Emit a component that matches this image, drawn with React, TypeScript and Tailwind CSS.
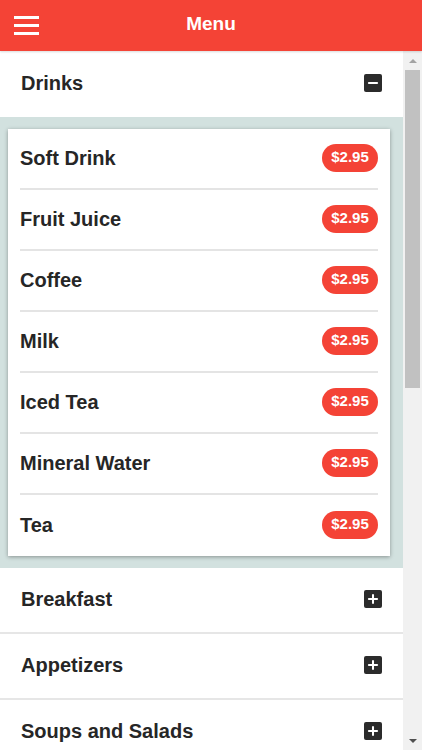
import { Minus, Plus } from "lucide-react";

const DRINKS = [
  "Soft Drink",
  "Fruit Juice",
  "Coffee",
  "Milk",
  "Iced Tea",
  "Mineral Water",
  "Tea",
];

const OTHER_SECTIONS = ["Breakfast", "Appetizers", "Soups and Salads"];

function ToggleIcon({ open }: { open: boolean }) {
  return (
    <span className="flex h-[18px] w-[18px] items-center justify-center rounded-[2px] bg-[#2b2b2b] text-white">
      {open ? <Minus size={14} strokeWidth={3.5} /> : <Plus size={14} strokeWidth={3.5} />}
    </span>
  );
}

function SectionHeader({ title, open }: { title: string; open: boolean }) {
  return (
    <div className="flex h-[66px] items-center justify-between border-b-2 border-[#e6e6e6] pb-[3px] pl-[21px] pr-[21px]">
      <span className="text-[20px] font-bold text-[#262626]">{title}</span>
      <ToggleIcon open={open} />
    </div>
  );
}

export default function App() {
  return (
    <div
      className="flex h-[750px] w-[422px] flex-col overflow-hidden bg-white"
      style={{ fontFamily: '"Liberation Sans", Arial, sans-serif' }}
    >
      <header className="relative flex h-[51px] shrink-0 items-center justify-center bg-[#f44336] shadow-[0_1px_2px_rgba(0,0,0,0.15)]">
        <button className="absolute left-[14px] top-[16px] flex flex-col gap-[5px]" aria-label="Menu">
          <span className="block h-[3px] w-[25px] bg-white" />
          <span className="block h-[3px] w-[25px] bg-white" />
          <span className="block h-[3px] w-[25px] bg-white" />
        </button>
        <h1 className="pb-[2px] text-[19px] font-bold text-white">Menu</h1>
      </header>

      <div className="flex min-h-0 flex-1">
        <main className="min-w-0 flex-1 overflow-hidden">
          <div className="flex h-[66px] items-center justify-between pb-[3px] pl-[21px] pr-[21px]">
            <span className="text-[20px] font-bold text-[#262626]">Drinks</span>
            <ToggleIcon open />
          </div>

          <div className="bg-[#d2e1df] pb-[12px] pl-[8px] pr-[13px] pt-[12px]">
            <ul className="bg-white px-[12px] shadow-[0_1px_4px_rgba(0,0,0,0.35)]">
              {DRINKS.map((name, idx) => (
                <li
                  key={name}
                  className={
                    "flex h-[61px] items-center justify-between pb-[2px] " +
                    (idx < DRINKS.length - 1 ? "border-b-2 border-[#e4e4e4]" : "")
                  }
                >
                  <span className="text-[20px] font-bold text-[#262626]">{name}</span>
                  <span className="flex h-[28px] w-[56px] items-center justify-center rounded-full bg-[#f44336] text-[15px] font-bold text-white">
                    $2.95
                  </span>
                </li>
              ))}
            </ul>
          </div>

          {OTHER_SECTIONS.map((s) => (
            <SectionHeader key={s} title={s} open={false} />
          ))}
        </main>

        {/* fake scrollbar */}
        <div className="flex w-[19px] shrink-0 flex-col bg-[#f1f1f1]">
          <div className="flex h-[19px] items-center justify-center">
            <span className="h-0 w-0 border-x-[4px] border-b-[4px] border-x-transparent border-b-[#a3a3a3]" />
          </div>
          <div className="flex-1 px-[2px]">
            <div className="h-[318px] bg-[#c1c1c1]" />
          </div>
          <div className="flex h-[19px] items-center justify-center">
            <span className="h-0 w-0 border-x-[4px] border-t-[4px] border-x-transparent border-t-[#505050]" />
          </div>
        </div>
      </div>
    </div>
  );
}
